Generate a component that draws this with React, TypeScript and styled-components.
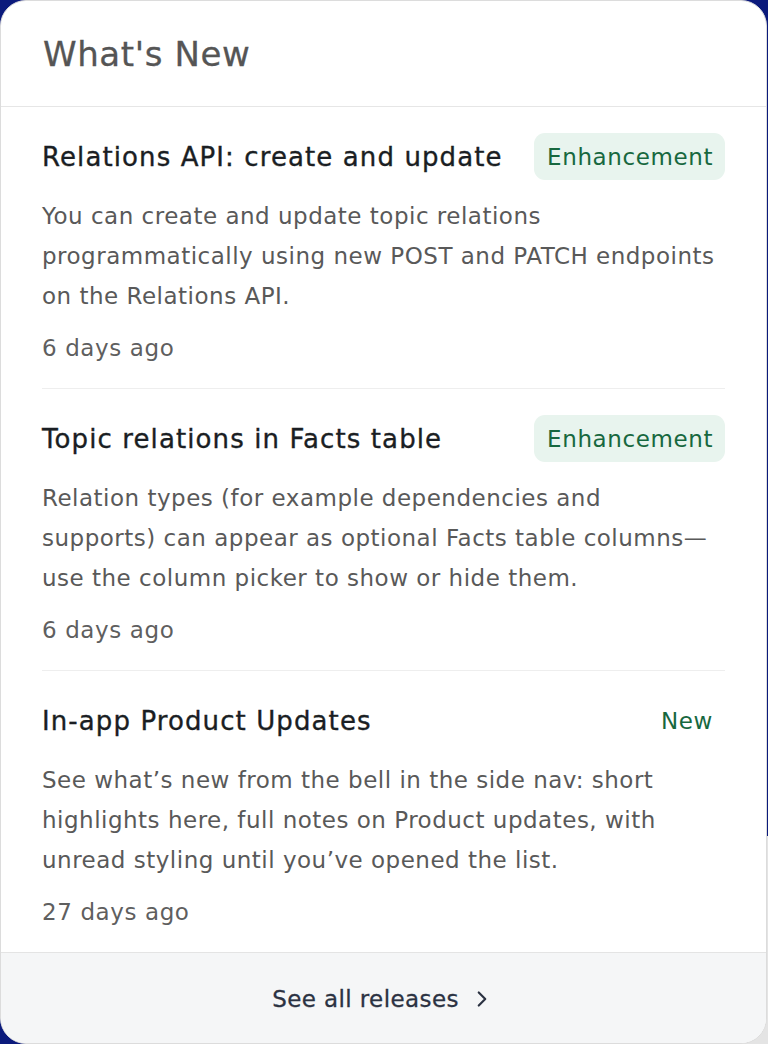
import React from "react";
import styled, { createGlobalStyle } from "styled-components";
import { ChevronRight } from "lucide-react";

const GlobalStyle = createGlobalStyle`
  html, body {
    margin: 0;
    padding: 0;
    background: linear-gradient(to bottom right, #0b1a7c 90%, #e4e4e4 90%);
  }
  #root {
    width: 768px;
    height: 1044px;
  }
  * {
    box-sizing: border-box;
  }
`;

type Release = {
  title: string;
  tag: string;
  plain?: boolean;
  body: string;
  when: string;
};

const releases: Release[] = [
  {
    title: "Relations API: create and update",
    tag: "Enhancement",
    body: "You can create and update topic relations programmatically using new POST and PATCH endpoints on the Relations API.",
    when: "6 days ago",
  },
  {
    title: "Topic relations in Facts table",
    tag: "Enhancement",
    body: "Relation types (for example dependencies and supports) can appear as optional Facts table columns\u2014use the column picker to show or hide them.",
    when: "6 days ago",
  },
  {
    title: "In-app Product Updates",
    tag: "New",
    plain: true,
    body: "See what\u2019s new from the bell in the side nav: short highlights here, full notes on Product updates, with unread styling until you\u2019ve opened the list.",
    when: "27 days ago",
  },
];

export default function App() {
  return (
    <>
      <GlobalStyle />
      <Card>
        <Header>What's New</Header>
        <List>
          {releases.map((r, i) => (
            <Item key={i} last={i === releases.length - 1}>
              <TitleRow>
                <Title>{r.title}</Title>
                <Tag plain={r.plain}>{r.tag}</Tag>
              </TitleRow>
              <Body>{r.body}</Body>
              <When>{r.when}</When>
            </Item>
          ))}
        </List>
        <Footer>
          <FooterLink>
            See all releases
            <ChevronRight size={26} strokeWidth={2} />
          </FooterLink>
        </Footer>
      </Card>
    </>
  );
}

const Card = styled.div`
  width: 767px;
  height: 1044px;
  display: flex;
  flex-direction: column;
  background: #fff;
  border: 1px solid #dcdcdc;
  border-radius: 26px;
  overflow: hidden;
  font-family: "DejaVu Sans", "Noto Sans", sans-serif;
`;

const Header = styled.div`
  height: 106px;
  padding: 33px 42px 0;
  border-bottom: 1px solid #e6e6e6;
  color: #555;
  font-size: 34px;
  line-height: 40px;
  letter-spacing: 0.6px;
  -webkit-text-stroke: 0.3px #555;
`;

const List = styled.div`
  flex: 1;
  padding: 0 41px;
`;

const Item = styled.div<{ last?: boolean }>`
  padding: 26px 0 20px;
  border-bottom: ${(p) => (p.last ? "none" : "1px solid #eeeeee")};
`;

const TitleRow = styled.div`
  display: flex;
  align-items: center;
  justify-content: space-between;
  height: 47px;
  margin-bottom: 16px;
`;

const Title = styled.div`
  color: #1a1e23;
  font-size: 26px;
  line-height: 34px;
  letter-spacing: 1.1px;
  -webkit-text-stroke: 0.35px #1a1e23;
`;

const Tag = styled.div<{ plain?: boolean }>`
  height: 47px;
  display: flex;
  align-items: center;
  padding: 0 12px 0 13px;
  border-radius: 11px;
  background: ${(p) => (p.plain ? "transparent" : "#e8f4ee")};
  color: #17683f;
  font-size: 23px;
  letter-spacing: 0.6px;
`;

const Body = styled.div`
  max-width: 677px;
  color: #595959;
  font-size: 23px;
  line-height: 40px;
  letter-spacing: 0.5px;
`;

const When = styled.div`
  margin-top: 12px;
  color: #5f5f5f;
  font-size: 23px;
  line-height: 40px;
  letter-spacing: 0.6px;
`;

const Footer = styled.div`
  height: 91px;
  display: flex;
  align-items: center;
  justify-content: center;
  background: #f5f6f7;
  border-top: 1px solid #e4e4e4;
`;

const FooterLink = styled.div`
  display: flex;
  align-items: center;
  gap: 10px;
  color: #2b3242;
  font-size: 23px;
  letter-spacing: 0.4px;
  padding-top: 2px;
  -webkit-text-stroke: 0.3px #2b3242;
`;
